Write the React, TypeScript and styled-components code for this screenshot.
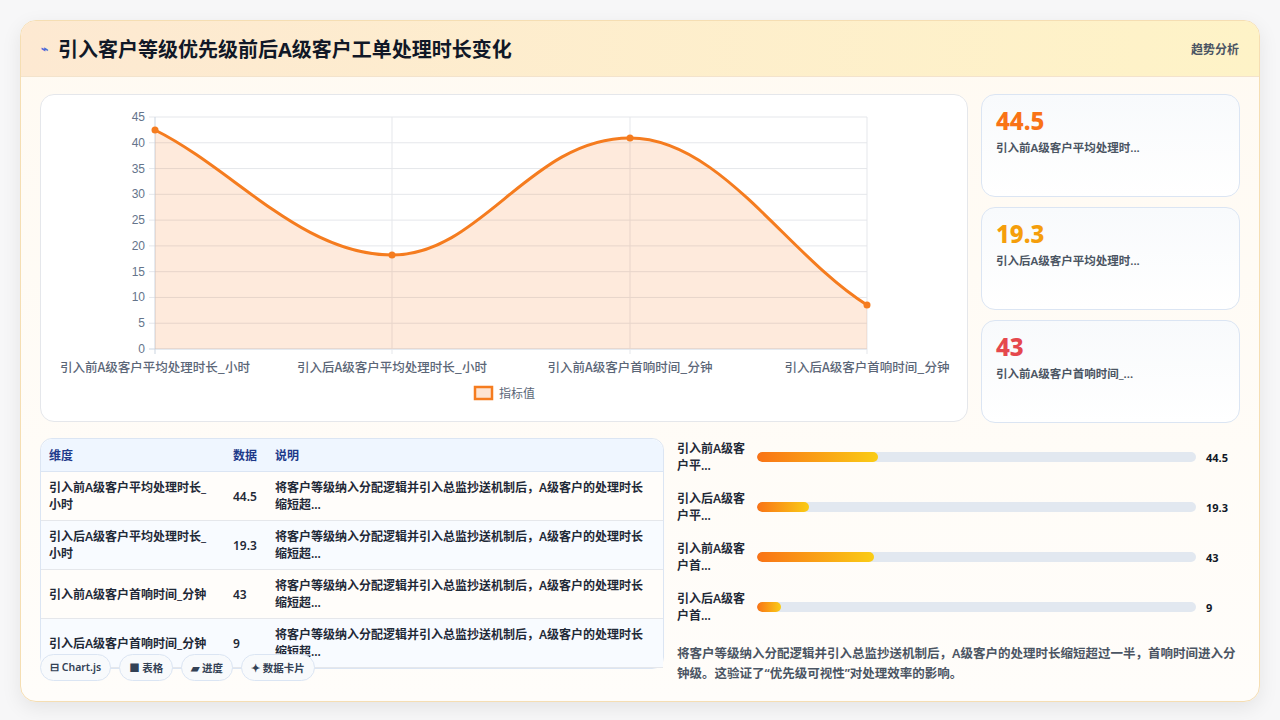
import styled, { createGlobalStyle } from 'styled-components'

const GlobalStyle = createGlobalStyle`
  html, body { margin: 0; padding: 0; }
  body {
    width: 1280px;
    height: 720px;
    overflow: hidden;
    background: #f7f7f8;
    font-family: "Noto Sans", "Noto Sans CJK SC", sans-serif;
  }
`

const stats = [
  { value: '44.5', label: '引入前A级客户平均处理时...', color: '#f97316' },
  { value: '19.3', label: '引入后A级客户平均处理时...', color: '#f59e0b' },
  { value: '43', label: '引入前A级客户首响时间_...', color: '#e5484d' },
]

const rows = [
  { name: '引入前A级客户平均处理时长_小时', value: '44.5' },
  { name: '引入后A级客户平均处理时长_小时', value: '19.3' },
  { name: '引入前A级客户首响时间_分钟', value: '43' },
  { name: '引入后A级客户首响时间_分钟', value: '9' },
]

const bars = [
  { label: '引入前A级客户平...', value: 44.5 },
  { label: '引入后A级客户平...', value: 19.3 },
  { label: '引入前A级客户首...', value: 43 },
  { label: '引入后A级客户首...', value: 9 },
]

const desc = '将客户等级纳入分配逻辑并引入总监抄送机制后，A级客户的处理时长缩短超...'

// Chart drawn in local coords of the chart card (card origin = 40,93)
const LineChart = () => {
  const ox = 40
  const oy = 93
  const pts = [
    [154, 128],
    [391, 253],
    [629, 136],
    [866, 303],
  ].map(([x, y]) => [x - ox, y - oy])
  const x0 = 154 - ox
  const x1 = 866 - ox
  const yTop = 115 - oy
  const yBot = 347 - oy
  const step = (yBot - yTop) / 9
  const curve = `M${pts[0][0]},${pts[0][1]} C${pts[0][0] + 80},${pts[0][1] + 40} ${pts[1][0] - 90},${pts[1][1]} ${pts[1][0]},${pts[1][1]} C${pts[1][0] + 90},${pts[1][1]} ${pts[2][0] - 100},${pts[2][1]} ${pts[2][0]},${pts[2][1]} C${pts[2][0] + 90},${pts[2][1]} ${pts[3][0] - 80},${pts[3][1] - 50} ${pts[3][0]},${pts[3][1]}`
  const labels = ['引入前A级客户平均处理时长_小时', '引入后A级客户平均处理时长_小时', '引入前A级客户首响时间_分钟', '引入后A级客户首响时间_分钟']
  return (
    <svg width="928" height="328" viewBox="0 0 928 328">
      {Array.from({ length: 10 }).map((_, i) => {
        const y = yTop + i * step
        return (
          <g key={i}>
            <line x1={x0 - 6} x2={x1} y1={y} y2={y} stroke={i === 9 ? '#cbd5e1' : '#e5e7eb'} />
            <text x={x0 - 10} y={y + 4} textAnchor="end" fontSize="12" fill="#64748b" fontFamily="Liberation Sans, sans-serif">
              {45 - i * 5}
            </text>
          </g>
        )
      })}
      {pts.map(([x], i) => (
        <line key={i} x1={x} x2={x} y1={yTop} y2={yBot + 5} stroke={i === 0 ? '#cbd5e1' : '#e5e7eb'} />
      ))}
      <path d={`${curve} L${x1},${yBot} L${x0},${yBot} Z`} fill="rgba(249,115,22,0.15)" />
      <path d={curve} fill="none" stroke="#f57c1f" strokeWidth="3" />
      {pts.map(([x, y], i) => (
        <circle key={i} cx={x} cy={y} r="3.5" fill="#f57c1f" />
      ))}
      {pts.map(([x], i) => (
        <text key={i} x={x} y={yBot + 23} textAnchor="middle" fontSize="12.5" fontWeight="500" fill="#5b6677" fontFamily="Noto Sans CJK SC, sans-serif">
          {labels[i]}
        </text>
      ))}
      <rect x={434} y={292} width={17} height={12} fill="#fde4d3" stroke="#f57c1f" strokeWidth="2.5" />
      <text x={458} y={303} fontSize="12" fill="#5b6677" fontFamily="Noto Sans CJK SC, sans-serif">指标值</text>
    </svg>
  )
}

export default function App() {
  return (
    <>
      <GlobalStyle />
      <Page>
        <Card>
          <Header>
            <Title>
              <Bolt>⌁</Bolt>引入客户等级优先级前后A级客户工单处理时长变化
            </Title>
            <HeaderTag>趋势分析</HeaderTag>
          </Header>
          <Body>
            <TopRow>
              <ChartPanel>
                <LineChart />
              </ChartPanel>
              <StatColumn>
                {stats.map((s) => (
                  <StatCard key={s.value}>
                    <StatValue $color={s.color}>{s.value}</StatValue>
                    <StatLabel>{s.label}</StatLabel>
                  </StatCard>
                ))}
              </StatColumn>
            </TopRow>
            <BottomRow>
              <TableWrap>
                <Table>
                  <colgroup>
                    <col style={{ width: 184 }} />
                    <col style={{ width: 42 }} />
                    <col />
                  </colgroup>
                  <thead>
                    <tr>
                      <Th>维度</Th>
                      <Th>数据</Th>
                      <Th>说明</Th>
                    </tr>
                  </thead>
                  <tbody>
                    {rows.map((r, i) => (
                      <Tr key={r.name} $alt={i % 2 === 1}>
                        <Td>{r.name}</Td>
                        <Td>{r.value}</Td>
                        <Td>{desc}</Td>
                      </Tr>
                    ))}
                  </tbody>
                </Table>
                <Tags>
                  <Tag>⊟ Chart.js</Tag>
                  <Tag>■ 表格</Tag>
                  <Tag>▰ 进度</Tag>
                  <Tag>✦ 数据卡片</Tag>
                </Tags>
              </TableWrap>
              <BarsPanel>
                <BarList>
                  {bars.map((b) => (
                    <BarRow key={b.label}>
                      <BarLabel>{b.label}</BarLabel>
                      <Track>
                        <Fill style={{ width: `${(b.value / 162) * 100}%` }} />
                      </Track>
                      <BarValue>{b.value}</BarValue>
                    </BarRow>
                  ))}
                </BarList>
                <Summary>
                  将客户等级纳入分配逻辑并引入总监抄送机制后，A级客户的处理时长缩短超过一半，首响时间进入分钟级。这验证了“优先级可视性”对处理效率的影响。
                </Summary>
              </BarsPanel>
            </BottomRow>
          </Body>
        </Card>
      </Page>
    </>
  )
}

const Page = styled.div`
  width: 1280px;
  height: 720px;
  padding: 20px;
  box-sizing: border-box;
`

const Card = styled.div`
  height: 680px;
  border: 1px solid #f5deb3;
  border-radius: 16px;
  background: linear-gradient(180deg, #fffaf2 0%, #fffdfa 100%);
  box-shadow: 0 6px 20px rgba(0, 0, 0, 0.08);
  overflow: hidden;
`

const Header = styled.div`
  height: 55px;
  display: flex;
  align-items: center;
  justify-content: space-between;
  padding: 0 20px;
  background: linear-gradient(90deg, #fde9d2 0%, #fef3c7 100%);
  border-bottom: 1px solid #f3e3cc;
`

const Title = styled.h1`
  margin: 0;
  font-size: 20px;
  font-weight: 700;
  color: #111827;
  display: flex;
  align-items: center;
  gap: 10px;
`

const Bolt = styled.span`
  color: #4f6bd8;
  font-size: 12px;
`

const HeaderTag = styled.span`
  font-size: 12px;
  font-weight: 600;
  color: #4b5563;
`

const Body = styled.div`
  padding: 17px 19px 0 19px;
  display: flex;
  flex-direction: column;
  gap: 15px;
`

const TopRow = styled.div`
  display: flex;
  gap: 13px;
`

const ChartPanel = styled.div`
  width: 928px;
  height: 328px;
  box-sizing: border-box;
  background: #fff;
  border: 1px solid #e5e7eb;
  border-radius: 14px;
  overflow: hidden;
`

const StatColumn = styled.div`
  flex: 1;
  display: flex;
  flex-direction: column;
  gap: 10px;
`

const StatCard = styled.div`
  height: 103px;
  box-sizing: border-box;
  padding: 12px 14px;
  border: 1px solid #dbe5f3;
  border-radius: 14px;
  background: linear-gradient(180deg, #f8fafc 0%, #fff 100%);
`

const StatValue = styled.div<{ $color: string }>`
  font-size: 24px;
  font-weight: 800;
  line-height: 28px;
  color: ${(p) => p.$color};
  font-family: "Noto Sans", sans-serif;
`

const StatLabel = styled.div`
  margin-top: 4px;
  font-size: 11.5px;
  font-weight: 600;
  color: #4b5563;
`

const BottomRow = styled.div`
  display: flex;
  gap: 13px;
`

const TableWrap = styled.div`
  position: relative;
  width: 624px;
  height: 231px;
  border: 1px solid #dbe5f3;
  border-radius: 12px;
  box-sizing: border-box;
  background: #fff;
`

const Table = styled.table`
  width: 100%;
  table-layout: fixed;
  border-collapse: collapse;
  font-size: 12px;
  font-weight: 600;
  color: #1f2937;
`

const Th = styled.th`
  text-align: left;
  height: 32px;
  padding: 0 8px;
  background: #eff6ff;
  color: #1e3a8a;
  border-bottom: 1px solid #dbe5f3;
  font-weight: 600;
  &:first-child { border-top-left-radius: 12px; }
  &:last-child { border-top-right-radius: 12px; }
`

const Tr = styled.tr<{ $alt: boolean }>`
  background: ${(p) => (p.$alt ? '#f8fbff' : '#fffdfa')};
`

const Td = styled.td`
  height: 48px;
  padding: 0 8px;
  line-height: 17px;
  border-bottom: 1px solid #e5e7eb;
  vertical-align: middle;
  overflow: hidden;
`

const Tags = styled.div`
  position: absolute;
  left: -1px;
  bottom: -13px;
  display: flex;
  gap: 8px;
`

const Tag = styled.span`
  padding: 5px 9px;
  border: 1px solid #dbe5f3;
  border-radius: 14px;
  background: #f8fafc;
  font-size: 10.5px;
  font-weight: 600;
  color: #334155;
`

const BarsPanel = styled.div`
  flex: 1;
  display: flex;
  flex-direction: column;
`

const BarList = styled.div`
  display: flex;
  flex-direction: column;
  gap: 16px;
  padding-top: 2px;
`

const BarRow = styled.div`
  display: flex;
  align-items: center;
  gap: 10px;
  height: 34px;
`

const BarLabel = styled.div`
  width: 70px;
  font-size: 12px;
  font-weight: 600;
  line-height: 17px;
  color: #1f2937;
`

const Track = styled.div`
  flex: 1;
  height: 10px;
  border-radius: 5px;
  background: #e2e8f0;
  overflow: hidden;
`

const Fill = styled.div`
  height: 100%;
  border-radius: 5px;
  background: linear-gradient(90deg, #f97316, #facc15);
`

const BarValue = styled.div`
  width: 34px;
  font-size: 11px;
  font-weight: 700;
  color: #111827;
`

const Summary = styled.p`
  margin: 20px 0 0;
  font-size: 12.5px;
  font-weight: 600;
  line-height: 20px;
  color: #4b5563;
`
